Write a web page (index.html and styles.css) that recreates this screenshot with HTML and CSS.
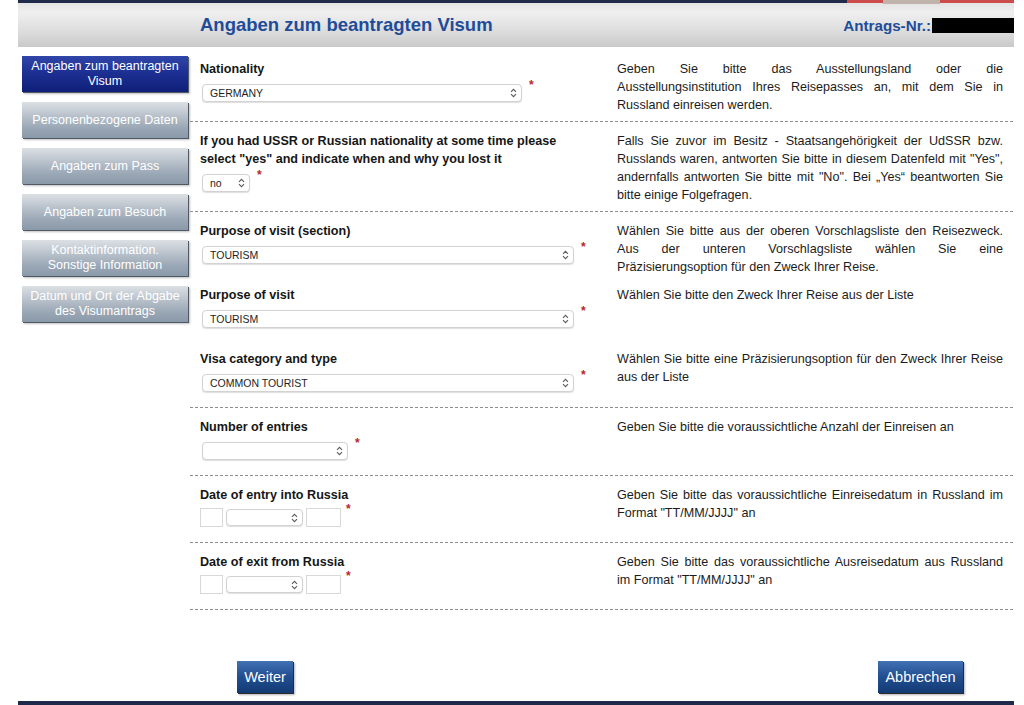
FILE: index.html
```html
<!DOCTYPE html>
<html lang="de">
<head>
<meta charset="utf-8">
<title>Angaben zum beantragten Visum</title>
<link rel="stylesheet" href="styles.css">
</head>
<body>
<div class="page">
  <div class="topline"><div class="navy"></div><div class="red"><span class="mark"></span></div></div>
  <header class="header">
    <h1 class="title">Angaben zum beantragten Visum</h1>
    <div class="appno">Antrags-Nr.:<span class="redacted"></span></div>
  </header>
  <div class="layout">
    <nav class="sidebar">
      <div class="nav active">Angaben zum beantragten Visum</div>
      <div class="nav">Personenbezogene Daten</div>
      <div class="nav">Angaben zum Pass</div>
      <div class="nav">Angaben zum Besuch</div>
      <div class="nav">Kontaktinformation. Sonstige Information</div>
      <div class="nav">Datum und Ort der Abgabe des Visumantrags</div>
    </nav>
    <main class="main">
      <div class="row">
        <div class="field">
          <div class="label">Nationality</div>
          <div class="control">
            <div class="select w-nat"><span>GERMANY</span><svg viewBox="0 0 7 10"><path d="M1 3.8L3.5 1.3L6 3.8M1 6.2L3.5 8.7L6 6.2"/></svg></div>
            <span class="req">*</span>
          </div>
        </div>
        <div class="help">
          <span class="ln">Geben Sie bitte das Ausstellungsland oder die</span>
          <span class="ln">Ausstellungsinstitution Ihres Reisepasses an, mit dem Sie in</span>
          <span class="ln end">Russland einreisen werden.</span>
        </div>
      </div>

      <div class="row sep">
        <div class="field">
          <div class="label">If you had USSR or Russian nationality at some time please<br>select "yes" and indicate when and why you lost it</div>
          <div class="control">
            <div class="select w-no"><span>no</span><svg viewBox="0 0 7 10"><path d="M1 3.8L3.5 1.3L6 3.8M1 6.2L3.5 8.7L6 6.2"/></svg></div>
            <span class="req">*</span>
          </div>
        </div>
        <div class="help">
          <span class="ln">Falls Sie zuvor im Besitz - Staatsangehörigkeit der UdSSR bzw.</span>
          <span class="ln">Russlands waren, antworten Sie bitte in diesem Datenfeld mit "Yes",</span>
          <span class="ln">andernfalls antworten Sie bitte mit "No". Bei „Yes“ beantworten Sie</span>
          <span class="ln end">bitte einige Folgefragen.</span>
        </div>
      </div>

      <div class="row sep sub">
        <div class="field">
          <div class="label">Purpose of visit (section)</div>
          <div class="control">
            <div class="select w-wide"><span>TOURISM</span><svg viewBox="0 0 7 10"><path d="M1 3.8L3.5 1.3L6 3.8M1 6.2L3.5 8.7L6 6.2"/></svg></div>
            <span class="req">*</span>
          </div>
        </div>
        <div class="help">
          <span class="ln">Wählen Sie bitte aus der oberen Vorschlagsliste den Reisezweck.</span>
          <span class="ln">Aus der unteren Vorschlagsliste wählen Sie eine</span>
          <span class="ln end">Präzisierungsoption für den Zweck Ihrer Reise.</span>
        </div>
      </div>

      <div class="row sub">
        <div class="field">
          <div class="label">Purpose of visit</div>
          <div class="control">
            <div class="select w-wide"><span>TOURISM</span><svg viewBox="0 0 7 10"><path d="M1 3.8L3.5 1.3L6 3.8M1 6.2L3.5 8.7L6 6.2"/></svg></div>
            <span class="req">*</span>
          </div>
        </div>
        <div class="help">Wählen Sie bitte den Zweck Ihrer Reise aus der Liste</div>
      </div>

      <div class="row">
        <div class="field">
          <div class="label">Visa category and type</div>
          <div class="control">
            <div class="select w-wide"><span>COMMON TOURIST</span><svg viewBox="0 0 7 10"><path d="M1 3.8L3.5 1.3L6 3.8M1 6.2L3.5 8.7L6 6.2"/></svg></div>
            <span class="req">*</span>
          </div>
        </div>
        <div class="help">
          <span class="ln">Wählen Sie bitte eine Präzisierungsoption für den Zweck Ihrer Reise</span>
          <span class="ln end">aus der Liste</span>
        </div>
      </div>

      <div class="row sep">
        <div class="field">
          <div class="label">Number of entries</div>
          <div class="control">
            <div class="select w-num"><span></span><svg viewBox="0 0 7 10"><path d="M1 3.8L3.5 1.3L6 3.8M1 6.2L3.5 8.7L6 6.2"/></svg></div>
            <span class="req">*</span>
          </div>
        </div>
        <div class="help">Geben Sie bitte die voraussichtliche Anzahl der Einreisen an</div>
      </div>

      <div class="row sep">
        <div class="field">
          <div class="label">Date of entry into Russia</div>
          <div class="control tight">
            <div class="date">
              <span class="box day"></span>
              <div class="select month"><span></span><svg viewBox="0 0 7 10"><path d="M1 3.8L3.5 1.3L6 3.8M1 6.2L3.5 8.7L6 6.2"/></svg></div>
              <span class="box year"></span>
            </div>
            <span class="req near">*</span>
          </div>
        </div>
        <div class="help">
          <span class="ln">Geben Sie bitte das voraussichtliche Einreisedatum in Russland im</span>
          <span class="ln end">Format "TT/MM/JJJJ" an</span>
        </div>
      </div>

      <div class="row sep">
        <div class="field">
          <div class="label">Date of exit from Russia</div>
          <div class="control tight">
            <div class="date">
              <span class="box day"></span>
              <div class="select month"><span></span><svg viewBox="0 0 7 10"><path d="M1 3.8L3.5 1.3L6 3.8M1 6.2L3.5 8.7L6 6.2"/></svg></div>
              <span class="box year"></span>
            </div>
            <span class="req near">*</span>
          </div>
        </div>
        <div class="help">
          <span class="ln">Geben Sie bitte das voraussichtliche Ausreisedatum aus Russland</span>
          <span class="ln end">im Format "TT/MM/JJJJ" an</span>
        </div>
      </div>

      <div class="actions">
        <button class="btn" type="button">Weiter</button>
        <button class="btn" type="button">Abbrechen</button>
      </div>
    </main>
  </div>
  <div class="bottomline"></div>
</div>
</body>
</html>
```
FILE: styles.css
```css
* { box-sizing: border-box; }
html, body { margin: 0; background: #fff; }
body {
  font-family: "Liberation Sans", Arial, sans-serif;
  color: #1c1c1c;
  height: 705px;
  overflow: hidden;
}
.page { width: 996px; margin-left: 18px; }

.topline { display: flex; height: 3px; }
.topline .navy { flex: 0 0 829px; background: #1f2a4b; }
.topline .red { flex: 1; background: #cc4b4b; position: relative; }
.topline .mark {
  position: absolute; left: 36px; top: 0; width: 57px; height: 4px;
  background: #bfb3ab;
}

.header {
  height: 44px;
  display: flex;
  align-items: center;
  justify-content: space-between;
  padding: 0 0 0 182px;
  background: linear-gradient(#e3e3e3, #efefef 22%, #dadada 70%, #c9c9c9);
}
.title {
  margin: 0;
  font-size: 18.5px;
  font-weight: bold;
  color: #1f4c99;
  line-height: 22px;
}
.appno {
  display: flex;
  align-items: center;
  font-size: 15.2px;
  font-weight: bold;
  color: #1f4c99;
}
.redacted {
  display: block;
  width: 82px;
  height: 15px;
  background: #000;
  margin-left: 1px;
}

.layout { display: grid; grid-template-columns: 172px 824px; }

.sidebar {
  display: flex;
  flex-direction: column;
  gap: 10px;
  padding: 9px 0 0 4px;
}
.nav {
  width: 166px;
  height: 36px;
  display: flex;
  align-items: center;
  justify-content: center;
  text-align: center;
  padding: 0 6px;
  color: #fff;
  font-size: 12.5px;
  line-height: 15px;
  background: linear-gradient(#dce0e4, #b7c0ca 40%, #9aa7b5 72%, #8a99a9);
  box-shadow: 1px 1px 0 #4f5863, 2px 2px 2px rgba(0, 0, 0, 0.25);
}
.nav.active {
  background: linear-gradient(#3046a8, #1d3093 45%, #0f1f78);
}

.main { padding-top: 3px; }

.row {
  display: grid;
  grid-template-columns: 417px 407px;
  padding-top: 10px;
}
.row.sep {
  padding-top: 11px;
  background-image: repeating-linear-gradient(90deg, #8e8e8e 0 3px, transparent 3px 5px);
  background-size: 100% 1px;
  background-repeat: no-repeat;
}
.field { padding: 0 0 15px 10px; }
.row.sub .field { padding-bottom: 12px; }
.label {
  font-weight: bold;
  font-size: 12.6px;
  line-height: 18px;
  color: #161616;
}
.control {
  display: flex;
  align-items: flex-start;
  margin-top: 6px;
}
.control.tight { margin-top: 4px; }
.help {
  padding: 0 11px 7px 10px;
  font-size: 12.6px;
  line-height: 18px;
  text-align: justify;
  color: #1c1c1c;
}
.help .ln {
  display: block;
  text-align: justify;
  text-align-last: justify;
}
.help .ln.end { text-align-last: left; }
.row.sub .help { padding-bottom: 0; }

.select {
  display: flex;
  align-items: center;
  justify-content: space-between;
  height: 18px;
  margin-left: 2px;
  padding: 0 4px 0 7px;
  background: #fff;
  border: 1px solid #d2d2d2;
  border-radius: 4px;
  box-shadow: 0 1px 1px rgba(0, 0, 0, 0.13);
  font-size: 10.5px;
  color: #1e1e1e;
}
.select svg {
  width: 7px;
  height: 10px;
  flex: none;
  fill: none;
  stroke: #5a5a5a;
  stroke-width: 1.1;
}
.w-nat { width: 320px; }
.w-no { width: 48px; }
.w-wide { width: 372px; }
.w-num { width: 146px; }

.req {
  color: #b8262b;
  font-size: 12px;
  font-weight: bold;
  line-height: 12px;
  margin: -5px 0 0 7px;
}
.req.near { margin-left: 5px; }

.date { display: flex; align-items: center; gap: 3px; }
.box {
  display: block;
  height: 19px;
  background: #fff;
  border: 1px solid #d8d8d8;
}
.box.day { width: 23px; }
.box.year { width: 35px; }
.select.month { width: 77px; height: 17px; margin-left: 0; }

.actions {
  display: flex;
  justify-content: space-between;
  padding: 52px 51px 8px 47px;
  background-image: repeating-linear-gradient(90deg, #8e8e8e 0 3px, transparent 3px 5px);
  background-size: 100% 1px;
  background-repeat: no-repeat;
}
.btn {
  height: 32px;
  border: 0;
  padding: 0;
  font-family: "Liberation Sans", Arial, sans-serif;
  font-size: 14.5px;
  color: #fff;
  background: linear-gradient(#4272b4, #245193 45%, #123a74);
  box-shadow: 1px 1px 0 #2b2b2b, 2px 2px 2px rgba(0, 0, 0, 0.3);
  cursor: pointer;
}
.btn:first-child { width: 56px; }
.btn:last-child { width: 85px; }

.bottomline { height: 4px; background: #1f2a4b; }
```
